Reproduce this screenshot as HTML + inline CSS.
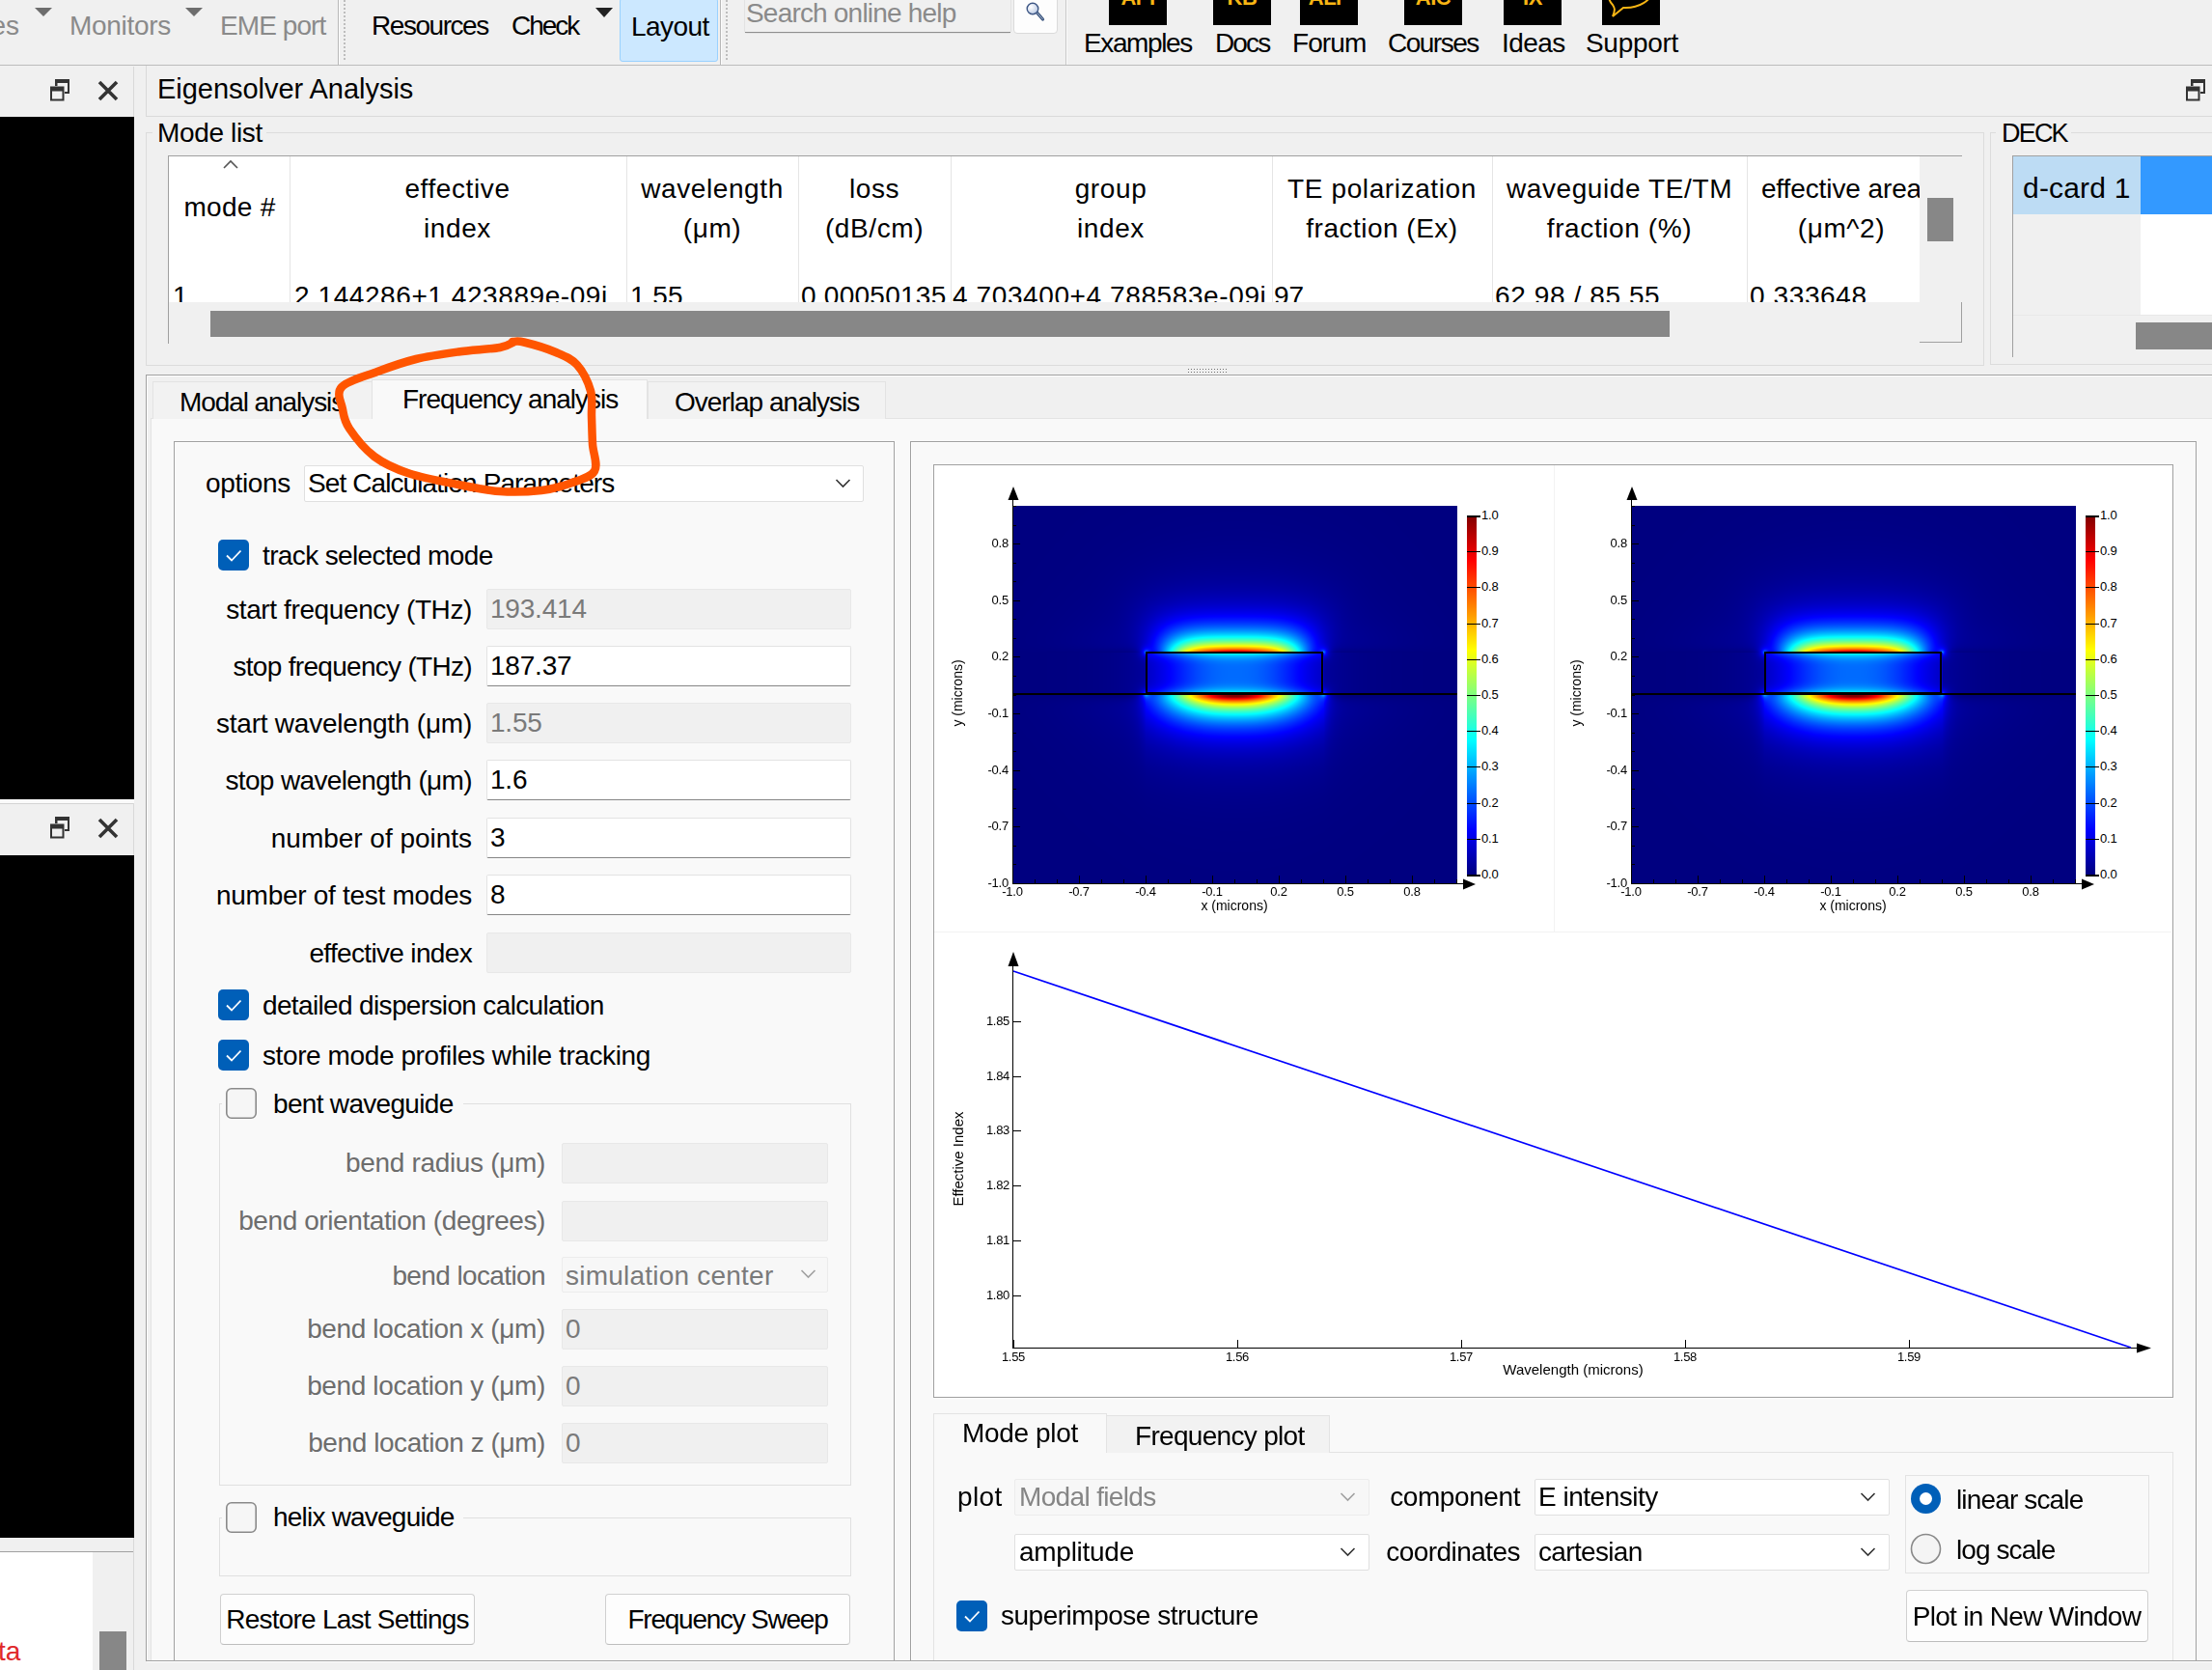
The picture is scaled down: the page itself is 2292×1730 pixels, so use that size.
<!DOCTYPE html>
<html><head><meta charset="utf-8"><style>html,body{margin:0;padding:0;width:2292px;height:1730px;overflow:hidden;background:#f0f0f0;}
body{position:relative;font-family:"Liberation Sans",sans-serif;}
.a{position:absolute;}
.t{position:absolute;white-space:pre;font-family:"Liberation Sans",sans-serif;}
</style></head>
<body>
<div class="a" style="left:0px;top:67px;width:2292px;height:1px;background:#bcbcbc;"></div>
<div class="t" style="top:13px;font-size:28px;line-height:28px;color:#8a8a8a;right:2272px;text-align:right;">es</div>
<svg class="a" style="left:36px;top:8px" width="19" height="10"><path d="M0 0 H18 L9 9 Z" fill="#6d6d6d"/></svg>
<div class="t" style="top:13px;font-size:28px;line-height:28px;color:#8a8a8a;left:72px;letter-spacing:-0.305px;">Monitors</div>
<svg class="a" style="left:192px;top:8px" width="19" height="10"><path d="M0 0 H18 L9 9 Z" fill="#6d6d6d"/></svg>
<div class="t" style="top:13px;font-size:28px;line-height:28px;color:#8a8a8a;left:228px;letter-spacing:-0.923px;">EME port</div>
<div class="a" style="left:350px;top:0px;width:1px;height:67px;background:#b8b8b8;"></div>
<div class="a" style="left:351px;top:0px;width:1px;height:67px;background:#fbfbfb;"></div>
<div class="a" style="left:356px;top:0;width:0;height:62px;border-left:2px dotted #bdbdbd"></div>
<div class="t" style="top:13px;font-size:28px;line-height:28px;color:#000;left:385px;letter-spacing:-1.450px;">Resources</div>
<div class="t" style="top:13px;font-size:28px;line-height:28px;color:#000;left:530px;letter-spacing:-2.034px;">Check</div>
<svg class="a" style="left:617px;top:8px" width="19" height="11"><path d="M0 0 H18 L9 10 Z" fill="#222"/></svg>
<div class="a" style="left:642px;top:-2px;width:102px;height:66px;background:#cce8ff;box-sizing:border-box;border:1px solid #99d1ff;border-radius:3px;"></div>
<div class="t" style="top:14px;font-size:28px;line-height:28px;color:#000;left:654px;letter-spacing:-0.568px;">Layout</div>
<div class="a" style="left:746px;top:0px;width:1px;height:67px;background:#b8b8b8;"></div>
<div class="a" style="left:747px;top:0px;width:1px;height:67px;background:#fbfbfb;"></div>
<div class="a" style="left:752px;top:0;width:0;height:62px;border-left:2px dotted #bdbdbd"></div>
<div class="a" style="left:771px;top:-4px;width:277px;height:39px;background:#f0f0f0;box-sizing:border-box;border:1px solid #e2e2e2;border-radius:3px;"></div>
<div class="a" style="left:772px;top:33px;width:275px;height:1px;background:#8f8f8f;"></div>
<div class="t" style="top:0px;font-size:28px;line-height:28px;color:#8a8a8a;left:773px;letter-spacing:-0.807px;">Search online help</div>
<div class="a" style="left:1050px;top:-6px;width:46px;height:41px;background:#fdfdfd;box-sizing:border-box;border:1px solid #dadada;border-radius:4px;"></div>
<svg class="a" style="left:1060px;top:1px" width="26" height="26"><defs><radialGradient id="lg" cx="0.35" cy="0.35" r="0.7"><stop offset="0" stop-color="#ffffff"/><stop offset="1" stop-color="#b9c9e4"/></radialGradient></defs><path d="M14 11.5 L20.5 19" stroke="#35507a" stroke-width="3.2" stroke-linecap="round"/><path d="M14 11.5 L20.5 19" stroke="#aab8d0" stroke-width="1" stroke-linecap="round"/><circle cx="10" cy="8" r="5.8" fill="url(#lg)" stroke="#3d5684" stroke-width="1.4"/></svg>
<div class="a" style="left:1104px;top:0px;width:1px;height:67px;background:#c8c8c8;"></div>
<div class="a" style="left:1105px;top:0px;width:1px;height:67px;background:#fbfbfb;"></div>
<div class="a" style="left:1149px;top:-30px;width:60px;height:56px;background:#000;"></div>
<div class="t" style="left:1149px;width:60px;text-align:center;top:-13px;font-size:22px;line-height:22px;font-weight:bold;color:#f7b514;letter-spacing:-0.5px">API</div>
<div class="a" style="left:1257px;top:-30px;width:60px;height:56px;background:#000;"></div>
<div class="t" style="left:1257px;width:60px;text-align:center;top:-13px;font-size:22px;line-height:22px;font-weight:bold;color:#f7b514;letter-spacing:-0.5px">KB</div>
<div class="a" style="left:1347px;top:-30px;width:60px;height:56px;background:#000;"></div>
<div class="t" style="left:1347px;width:60px;text-align:center;top:-13px;font-size:22px;line-height:22px;font-weight:bold;color:#f7b514;letter-spacing:-0.5px">ALP</div>
<div class="a" style="left:1455px;top:-30px;width:60px;height:56px;background:#000;"></div>
<div class="t" style="left:1455px;width:60px;text-align:center;top:-13px;font-size:22px;line-height:22px;font-weight:bold;color:#f7b514;letter-spacing:-0.5px">AIC</div>
<div class="a" style="left:1558px;top:-30px;width:60px;height:56px;background:#000;"></div>
<div class="t" style="left:1558px;width:60px;text-align:center;top:-13px;font-size:22px;line-height:22px;font-weight:bold;color:#f7b514;letter-spacing:-0.5px">IX</div>
<div class="a" style="left:1660px;top:-30px;width:60px;height:56px;background:#000;"></div>
<svg class="a" style="left:1660px;top:-30px" width="60" height="56"><path d="M8 18 C8 6 50 6 52 20 C52 30 38 39 22 38 L11 47 C14 40 13 38 11 35 C6 30 6 24 8 18 Z" fill="none" stroke="#f7b514" stroke-width="2"/></svg>
<div class="t" style="top:31px;font-size:28px;line-height:28px;color:#000;left:1123px;letter-spacing:-1.385px;">Examples</div>
<div class="t" style="top:31px;font-size:28px;line-height:28px;color:#000;left:1259px;letter-spacing:-1.852px;">Docs</div>
<div class="t" style="top:31px;font-size:28px;line-height:28px;color:#000;left:1339px;letter-spacing:-0.917px;">Forum</div>
<div class="t" style="top:31px;font-size:28px;line-height:28px;color:#000;left:1438px;letter-spacing:-1.504px;">Courses</div>
<div class="t" style="top:31px;font-size:28px;line-height:28px;color:#000;left:1556px;letter-spacing:-0.565px;">Ideas</div>
<div class="t" style="top:31px;font-size:28px;line-height:28px;color:#000;left:1643px;letter-spacing:-0.306px;">Support</div>
<div class="a" style="left:138px;top:69px;width:1px;height:1661px;background:#d9d9d9;"></div>
<svg class="a" style="left:51px;top:82px" width="23" height="24"><rect x="6" y="0" width="15" height="15" fill="#333"/><rect x="8.5" y="4" width="10.5" height="9" fill="#f0f0f0"/><rect x="0.5" y="7" width="15.5" height="16" fill="#f0f0f0"/><rect x="1" y="7.5" width="14.5" height="15" fill="#333"/><rect x="3" y="12.5" width="10.5" height="8" fill="#f0f0f0"/></svg>
<svg class="a" style="left:101px;top:83px" width="22" height="22"><path d="M2 2 L20 20 M20 2 L2 20" stroke="#333" stroke-width="3.6"/></svg>
<div class="a" style="left:0px;top:121px;width:139px;height:707px;background:#000;"></div>
<div class="a" style="left:0px;top:828px;width:139px;height:4px;background:#fafafa;"></div>
<div class="a" style="left:0px;top:832px;width:138px;height:1px;background:#d4d4d4;"></div>
<svg class="a" style="left:51px;top:846px" width="23" height="24"><rect x="6" y="0" width="15" height="15" fill="#333"/><rect x="8.5" y="4" width="10.5" height="9" fill="#f0f0f0"/><rect x="0.5" y="7" width="15.5" height="16" fill="#f0f0f0"/><rect x="1" y="7.5" width="14.5" height="15" fill="#333"/><rect x="3" y="12.5" width="10.5" height="8" fill="#f0f0f0"/></svg>
<svg class="a" style="left:101px;top:847px" width="22" height="22"><path d="M2 2 L20 20 M20 2 L2 20" stroke="#333" stroke-width="3.6"/></svg>
<div class="a" style="left:0px;top:886px;width:139px;height:707px;background:#000;"></div>
<div class="a" style="left:0px;top:1607px;width:138px;height:1px;background:#a0a0a0;"></div>
<div class="a" style="left:0px;top:1608px;width:96px;height:122px;background:#fff;"></div>
<div class="a" style="left:96px;top:1608px;width:42px;height:122px;background:#f0f0f0;"></div>
<div class="a" style="left:103px;top:1690px;width:28px;height:40px;background:#878787;"></div>
<div class="t" style="top:1697px;font-size:28px;line-height:28px;color:#e0282a;left:-2px;">ta</div>
<div class="a" style="left:151px;top:68px;width:1px;height:53px;background:#dadada;"></div>
<div class="a" style="left:151px;top:120px;width:2141px;height:1px;background:#dadada;"></div>
<div class="t" style="top:78px;font-size:29px;line-height:29px;color:#000;left:163px;letter-spacing:-0.035px;">Eigensolver Analysis</div>
<svg class="a" style="left:2264px;top:82px" width="23" height="24"><rect x="6" y="0" width="15" height="15" fill="#333"/><rect x="8.5" y="4" width="10.5" height="9" fill="#f0f0f0"/><rect x="0.5" y="7" width="15.5" height="16" fill="#f0f0f0"/><rect x="1" y="7.5" width="14.5" height="15" fill="#333"/><rect x="3" y="12.5" width="10.5" height="8" fill="#f0f0f0"/></svg>
<div class="a" style="left:151px;top:137px;width:1905px;height:242px;box-sizing:border-box;border:1px solid #dcdcdc;"></div>
<div class="a" style="left:158px;top:125px;width:118px;height:25px;background:#f0f0f0;"></div>
<div class="t" style="top:124px;font-size:28px;line-height:28px;color:#000;left:163px;letter-spacing:-0.351px;">Mode list</div>
<div class="a" style="left:175px;top:162px;width:1814px;height:151px;background:#fff;"></div>
<div class="a" style="left:174px;top:161px;width:1859px;height:1px;background:#a0a0a0;"></div>
<div class="a" style="left:174px;top:161px;width:1px;height:195px;background:#a0a0a0;"></div>
<div class="a" style="left:300px;top:162px;width:1px;height:151px;background:#e5e5e5;"></div>
<div class="a" style="left:649px;top:162px;width:1px;height:151px;background:#e5e5e5;"></div>
<div class="a" style="left:827px;top:162px;width:1px;height:151px;background:#e5e5e5;"></div>
<div class="a" style="left:985px;top:162px;width:1px;height:151px;background:#e5e5e5;"></div>
<div class="a" style="left:1318px;top:162px;width:1px;height:151px;background:#e5e5e5;"></div>
<div class="a" style="left:1546px;top:162px;width:1px;height:151px;background:#e5e5e5;"></div>
<div class="a" style="left:1810px;top:162px;width:1px;height:151px;background:#e5e5e5;"></div>
<svg class="a" style="left:231px;top:165px" width="16" height="10"><path d="M1 9 L8 2 L15 9" fill="none" stroke="#555" stroke-width="1.6"/></svg>
<div class="t" style="top:201px;font-size:28px;line-height:28px;color:#000;left:-362px;width:1200px;text-align:center;letter-spacing:0.3px;">mode #</div>
<div class="a" style="left:175px;top:162px;width:1814px;height:110px;overflow:hidden">
<div class="t" style="top:20px;font-size:28px;line-height:28px;color:#000;left:-301px;width:1200px;text-align:center;letter-spacing:0.600px;">effective</div>
<div class="t" style="top:61px;font-size:28px;line-height:28px;color:#000;left:-301px;width:1200px;text-align:center;letter-spacing:0.600px;">index</div>
<div class="t" style="top:20px;font-size:28px;line-height:28px;color:#000;left:-37px;width:1200px;text-align:center;letter-spacing:0.600px;">wavelength</div>
<div class="t" style="top:61px;font-size:28px;line-height:28px;color:#000;left:-37px;width:1200px;text-align:center;letter-spacing:0.600px;">(μm)</div>
<div class="t" style="top:20px;font-size:28px;line-height:28px;color:#000;left:131px;width:1200px;text-align:center;letter-spacing:0.600px;">loss</div>
<div class="t" style="top:61px;font-size:28px;line-height:28px;color:#000;left:131px;width:1200px;text-align:center;letter-spacing:0.600px;">(dB/cm)</div>
<div class="t" style="top:20px;font-size:28px;line-height:28px;color:#000;left:376px;width:1200px;text-align:center;letter-spacing:0.600px;">group</div>
<div class="t" style="top:61px;font-size:28px;line-height:28px;color:#000;left:376px;width:1200px;text-align:center;letter-spacing:0.600px;">index</div>
<div class="t" style="top:20px;font-size:28px;line-height:28px;color:#000;left:657px;width:1200px;text-align:center;letter-spacing:0.600px;">TE polarization</div>
<div class="t" style="top:61px;font-size:28px;line-height:28px;color:#000;left:657px;width:1200px;text-align:center;letter-spacing:0.492px;">fraction (Ex)</div>
<div class="t" style="top:20px;font-size:28px;line-height:28px;color:#000;left:903px;width:1200px;text-align:center;letter-spacing:0.600px;">waveguide TE/TM</div>
<div class="t" style="top:61px;font-size:28px;line-height:28px;color:#000;left:903px;width:1200px;text-align:center;letter-spacing:0.600px;">fraction (%)</div>
<div class="t" style="top:20px;font-size:28px;line-height:28px;color:#000;left:1133px;width:1200px;text-align:center;letter-spacing:-0.1px;">effective area</div>
<div class="t" style="top:61px;font-size:28px;line-height:28px;color:#000;left:1133px;width:1200px;text-align:center;letter-spacing:0.600px;">(μm^2)</div>
</div>
<div class="a" style="left:175px;top:263px;width:1814px;height:50px;overflow:hidden">
<div class="t" style="top:30px;font-size:28px;line-height:28px;color:#000;left:4px;letter-spacing:0px;">1</div>
<div class="t" style="top:30px;font-size:28px;line-height:28px;color:#000;left:130px;letter-spacing:0.574px;">2.144286+1.423889e-09i</div>
<div class="t" style="top:30px;font-size:28px;line-height:28px;color:#000;left:478px;letter-spacing:0px;">1.55</div>
<div class="t" style="top:30px;font-size:28px;line-height:28px;color:#000;left:655px;letter-spacing:0.256px;">0.00050135</div>
<div class="t" style="top:30px;font-size:28px;line-height:28px;color:#000;left:812px;letter-spacing:0.600px;">4.703400+4.788583e-09i</div>
<div class="t" style="top:30px;font-size:28px;line-height:28px;color:#000;left:1145px;letter-spacing:0px;">97</div>
<div class="t" style="top:30px;font-size:28px;line-height:28px;color:#000;left:1374px;letter-spacing:0.600px;">62.98 / 85.55</div>
<div class="t" style="top:30px;font-size:28px;line-height:28px;color:#000;left:1638px;letter-spacing:0.600px;">0.333648</div>
</div>
<div class="a" style="left:218px;top:322px;width:1512px;height:27px;background:#878787;"></div>
<div class="a" style="left:1989px;top:162px;width:44px;height:151px;background:#f0f0f0;"></div>
<div class="a" style="left:1997px;top:205px;width:27px;height:45px;background:#878787;"></div>
<div class="a" style="left:1989px;top:354px;width:44px;height:1px;background:#a0a0a0;"></div>
<div class="a" style="left:2032px;top:313px;width:1px;height:42px;background:#a0a0a0;"></div>
<div class="a" style="left:2062px;top:137px;width:238px;height:241px;box-sizing:border-box;border:1px solid #dcdcdc;"></div>
<div class="a" style="left:2068px;top:125px;width:78px;height:25px;background:#f0f0f0;"></div>
<div class="t" style="top:125px;font-size:27px;line-height:27px;color:#000;left:2074px;letter-spacing:-1.8px;">DECK</div>
<div class="a" style="left:2085px;top:161px;width:207px;height:1px;background:#a0a0a0;"></div>
<div class="a" style="left:2085px;top:161px;width:1px;height:209px;background:#a0a0a0;"></div>
<div class="a" style="left:2086px;top:162px;width:132px;height:60px;background:#bddcf4;"></div>
<div class="a" style="left:2218px;top:162px;width:74px;height:60px;background:#3399ff;"></div>
<div class="a" style="left:2218px;top:222px;width:74px;height:104px;background:#fff;"></div>
<div class="a" style="left:2086px;top:326px;width:206px;height:1px;background:#e8e8e8;"></div>
<div class="a" style="left:2213px;top:334px;width:79px;height:28px;background:#878787;"></div>
<div class="t" style="top:180px;font-size:30px;line-height:30px;color:#000;left:2096px;letter-spacing:0.191px;">d-card 1</div>
<svg class="a" style="left:1231px;top:382px" width="42" height="5"><g fill="#707070"><rect x="0" y="0" width="1" height="1"/><rect x="0" y="3" width="1" height="1"/><rect x="3" y="0" width="1" height="1"/><rect x="3" y="3" width="1" height="1"/><rect x="6" y="0" width="1" height="1"/><rect x="6" y="3" width="1" height="1"/><rect x="9" y="0" width="1" height="1"/><rect x="9" y="3" width="1" height="1"/><rect x="12" y="0" width="1" height="1"/><rect x="12" y="3" width="1" height="1"/><rect x="15" y="0" width="1" height="1"/><rect x="15" y="3" width="1" height="1"/><rect x="18" y="0" width="1" height="1"/><rect x="18" y="3" width="1" height="1"/><rect x="21" y="0" width="1" height="1"/><rect x="21" y="3" width="1" height="1"/><rect x="24" y="0" width="1" height="1"/><rect x="24" y="3" width="1" height="1"/><rect x="27" y="0" width="1" height="1"/><rect x="27" y="3" width="1" height="1"/><rect x="30" y="0" width="1" height="1"/><rect x="30" y="3" width="1" height="1"/><rect x="33" y="0" width="1" height="1"/><rect x="33" y="3" width="1" height="1"/><rect x="36" y="0" width="1" height="1"/><rect x="36" y="3" width="1" height="1"/><rect x="39" y="0" width="1" height="1"/><rect x="39" y="3" width="1" height="1"/></g></svg>
<div class="a" style="left:151px;top:388px;width:2141px;height:1px;background:#a0a0a0;"></div>
<div class="a" style="left:152px;top:389px;width:2140px;height:1px;background:#ffffff;"></div>
<div class="a" style="left:156px;top:433px;width:2136px;height:1287px;background:#f9f9f9;"></div>
<div class="a" style="left:156px;top:433px;width:2136px;height:1px;background:#e3e3e3;"></div>
<div class="a" style="left:156px;top:433px;width:1px;height:1287px;background:#e3e3e3;"></div>
<div class="a" style="left:151px;top:388px;width:1px;height:1333px;background:#a0a0a0;"></div>
<div class="a" style="left:152px;top:389px;width:1px;height:1331px;background:#fff;"></div>
<div class="a" style="left:158px;top:395px;width:228px;height:39px;background:#f2f2f2;box-sizing:border-box;border:1px solid #e3e3e3;border-bottom:none;"></div>
<div class="a" style="left:671px;top:395px;width:247px;height:39px;background:#f2f2f2;box-sizing:border-box;border:1px solid #e3e3e3;border-bottom:none;"></div>
<div class="a" style="left:385px;top:393px;width:286px;height:41px;background:#f9f9f9;box-sizing:border-box;border:1px solid #e3e3e3;border-bottom:none;"></div>
<div class="t" style="top:403px;font-size:28px;line-height:28px;color:#000;left:186px;letter-spacing:-1.074px;">Modal analysis</div>
<div class="t" style="top:400px;font-size:28px;line-height:28px;color:#000;left:417px;letter-spacing:-1.000px;">Frequency analysis</div>
<div class="t" style="top:403px;font-size:28px;line-height:28px;color:#000;left:699px;letter-spacing:-0.983px;">Overlap analysis</div>
<div class="a" style="left:180px;top:457px;width:747px;height:1264px;box-sizing:border-box;border:1px solid #a0a0a0;box-shadow:inset 1px 1px 0 #fff, 1px 1px 0 #fff;"></div>
<div class="t" style="top:487px;font-size:28px;line-height:28px;color:#000;left:213px;letter-spacing:-0.343px;">options</div>
<div class="a" style="left:315px;top:482px;width:580px;height:38px;background:#fff;box-sizing:border-box;border:1px solid #e0e0e0;border-radius:2px;"></div>
<svg class="a" style="left:865px;top:495px" width="18" height="12"><path d="M1.5 2 L8.5 9 L15.5 2" fill="none" stroke="#333" stroke-width="1.6"/></svg>
<div class="t" style="top:487px;font-size:28px;line-height:28px;color:#000;left:319px;letter-spacing:-0.904px;">Set Calculation Parameters</div>
<svg class="a" style="left:226px;top:559px" width="32" height="32"><rect x="0" y="0" width="32" height="32" rx="5" fill="#005fb8"/><path d="M9 16.5 L14 21.5 L23.5 11.5" fill="none" stroke="#fff" stroke-width="1.8"/></svg>
<div class="t" style="top:562px;font-size:28px;line-height:28px;color:#000;left:272px;letter-spacing:-0.630px;">track selected mode</div>
<div class="a" style="left:504px;top:610px;width:378px;height:42px;background:#f0f0f0;box-sizing:border-box;border:1px solid #e8e8e8;border-radius:2px;"></div>
<div class="t" style="top:617px;font-size:28px;line-height:28px;color:#7a7a7a;left:508px;letter-spacing:-0.2px;">193.414</div>
<div class="t" style="top:618px;font-size:28px;line-height:28px;color:#000;right:1803px;text-align:right;letter-spacing:-0.386px;">start frequency (THz)</div>
<div class="a" style="left:504px;top:669px;width:378px;height:42px;background:#fff;box-sizing:border-box;border:1px solid #e3e3e3;border-bottom:1px solid #868686;border-radius:2px;"></div>
<div class="t" style="top:676px;font-size:28px;line-height:28px;color:#000;left:508px;letter-spacing:-0.2px;">187.37</div>
<div class="t" style="top:677px;font-size:28px;line-height:28px;color:#000;right:1803px;text-align:right;letter-spacing:-0.694px;">stop frequency (THz)</div>
<div class="a" style="left:504px;top:728px;width:378px;height:42px;background:#f0f0f0;box-sizing:border-box;border:1px solid #e8e8e8;border-radius:2px;"></div>
<div class="t" style="top:735px;font-size:28px;line-height:28px;color:#7a7a7a;left:508px;letter-spacing:-0.2px;">1.55</div>
<div class="t" style="top:736px;font-size:28px;line-height:28px;color:#000;right:1803px;text-align:right;letter-spacing:-0.227px;">start wavelength (μm)</div>
<div class="a" style="left:504px;top:787px;width:378px;height:42px;background:#fff;box-sizing:border-box;border:1px solid #e3e3e3;border-bottom:1px solid #868686;border-radius:2px;"></div>
<div class="t" style="top:794px;font-size:28px;line-height:28px;color:#000;left:508px;letter-spacing:-0.2px;">1.6</div>
<div class="t" style="top:795px;font-size:28px;line-height:28px;color:#000;right:1803px;text-align:right;letter-spacing:-0.632px;">stop wavelength (μm)</div>
<div class="a" style="left:504px;top:847px;width:378px;height:42px;background:#fff;box-sizing:border-box;border:1px solid #e3e3e3;border-bottom:1px solid #868686;border-radius:2px;"></div>
<div class="t" style="top:854px;font-size:28px;line-height:28px;color:#000;left:508px;letter-spacing:-0.2px;">3</div>
<div class="t" style="top:855px;font-size:28px;line-height:28px;color:#000;right:1803px;text-align:right;letter-spacing:-0.023px;">number of points</div>
<div class="a" style="left:504px;top:906px;width:378px;height:42px;background:#fff;box-sizing:border-box;border:1px solid #e3e3e3;border-bottom:1px solid #868686;border-radius:2px;"></div>
<div class="t" style="top:913px;font-size:28px;line-height:28px;color:#000;left:508px;letter-spacing:-0.2px;">8</div>
<div class="t" style="top:914px;font-size:28px;line-height:28px;color:#000;right:1803px;text-align:right;letter-spacing:-0.293px;">number of test modes</div>
<div class="a" style="left:504px;top:966px;width:378px;height:42px;background:#f0f0f0;box-sizing:border-box;border:1px solid #e8e8e8;border-radius:2px;"></div>
<div class="t" style="top:974px;font-size:28px;line-height:28px;color:#000;right:1803px;text-align:right;letter-spacing:-0.661px;">effective index</div>
<svg class="a" style="left:226px;top:1025px" width="32" height="32"><rect x="0" y="0" width="32" height="32" rx="5" fill="#005fb8"/><path d="M9 16.5 L14 21.5 L23.5 11.5" fill="none" stroke="#fff" stroke-width="1.8"/></svg>
<div class="t" style="top:1028px;font-size:28px;line-height:28px;color:#000;left:272px;letter-spacing:-0.645px;">detailed dispersion calculation</div>
<svg class="a" style="left:226px;top:1077px" width="32" height="32"><rect x="0" y="0" width="32" height="32" rx="5" fill="#005fb8"/><path d="M9 16.5 L14 21.5 L23.5 11.5" fill="none" stroke="#fff" stroke-width="1.8"/></svg>
<div class="t" style="top:1080px;font-size:28px;line-height:28px;color:#000;left:272px;letter-spacing:-0.402px;">store mode profiles while tracking</div>
<div class="a" style="left:227px;top:1143px;width:655px;height:396px;box-sizing:border-box;border:1px solid #e0e0e0;"></div>
<div class="a" style="left:230px;top:1120px;width:250px;height:45px;background:#f9f9f9;"></div>
<svg class="a" style="left:234px;top:1127px" width="32" height="32"><rect x="0.8" y="0.8" width="30.4" height="30.4" rx="5" fill="#f6f6f6" stroke="#8a8a8a" stroke-width="1.6"/></svg>
<div class="t" style="top:1130px;font-size:28px;line-height:28px;color:#000;left:283px;letter-spacing:-0.686px;">bent waveguide</div>
<div class="a" style="left:582px;top:1184px;width:276px;height:42px;background:#f0f0f0;box-sizing:border-box;border:1px solid #e8e8e8;border-radius:2px;"></div>
<div class="t" style="top:1191px;font-size:28px;line-height:28px;color:#6d6d6d;right:1727px;text-align:right;letter-spacing:-0.332px;">bend radius (μm)</div>
<div class="a" style="left:582px;top:1244px;width:276px;height:42px;background:#f0f0f0;box-sizing:border-box;border:1px solid #e8e8e8;border-radius:2px;"></div>
<div class="t" style="top:1251px;font-size:28px;line-height:28px;color:#6d6d6d;right:1727px;text-align:right;letter-spacing:-0.409px;">bend orientation (degrees)</div>
<div class="a" style="left:582px;top:1302px;width:276px;height:37px;background:#f7f7f7;box-sizing:border-box;border:1px solid #ececec;border-radius:2px;"></div>
<svg class="a" style="left:829px;top:1314px" width="18" height="12"><path d="M1.5 2 L8.5 9 L15.5 2" fill="none" stroke="#a0a0a0" stroke-width="1.6"/></svg>
<div class="t" style="top:1308px;font-size:28px;line-height:28px;color:#7a7a7a;left:586px;letter-spacing:0.224px;">simulation center</div>
<div class="t" style="top:1308px;font-size:28px;line-height:28px;color:#6d6d6d;right:1727px;text-align:right;letter-spacing:-0.612px;">bend location</div>
<div class="a" style="left:582px;top:1356px;width:276px;height:42px;background:#f0f0f0;box-sizing:border-box;border:1px solid #e8e8e8;border-radius:2px;"></div>
<div class="t" style="top:1363px;font-size:28px;line-height:28px;color:#7a7a7a;left:586px;letter-spacing:-0.2px;">0</div>
<div class="t" style="top:1363px;font-size:28px;line-height:28px;color:#6d6d6d;right:1727px;text-align:right;letter-spacing:-0.369px;">bend location x (μm)</div>
<div class="a" style="left:582px;top:1415px;width:276px;height:42px;background:#f0f0f0;box-sizing:border-box;border:1px solid #e8e8e8;border-radius:2px;"></div>
<div class="t" style="top:1422px;font-size:28px;line-height:28px;color:#7a7a7a;left:586px;letter-spacing:-0.2px;">0</div>
<div class="t" style="top:1422px;font-size:28px;line-height:28px;color:#6d6d6d;right:1727px;text-align:right;letter-spacing:-0.369px;">bend location y (μm)</div>
<div class="a" style="left:582px;top:1474px;width:276px;height:42px;background:#f0f0f0;box-sizing:border-box;border:1px solid #e8e8e8;border-radius:2px;"></div>
<div class="t" style="top:1481px;font-size:28px;line-height:28px;color:#7a7a7a;left:586px;letter-spacing:-0.2px;">0</div>
<div class="t" style="top:1481px;font-size:28px;line-height:28px;color:#6d6d6d;right:1727px;text-align:right;letter-spacing:-0.422px;">bend location z (μm)</div>
<div class="a" style="left:227px;top:1572px;width:655px;height:61px;box-sizing:border-box;border:1px solid #e0e0e0;"></div>
<div class="a" style="left:230px;top:1550px;width:250px;height:40px;background:#f9f9f9;"></div>
<svg class="a" style="left:234px;top:1556px" width="32" height="32"><rect x="0.8" y="0.8" width="30.4" height="30.4" rx="5" fill="#f6f6f6" stroke="#8a8a8a" stroke-width="1.6"/></svg>
<div class="t" style="top:1558px;font-size:28px;line-height:28px;color:#000;left:283px;letter-spacing:-0.786px;">helix waveguide</div>
<div class="a" style="left:228px;top:1651px;width:264px;height:53px;background:#fdfdfd;box-sizing:border-box;border:1px solid #d0d0d0;border-bottom:1px solid #bdbdbd;border-radius:4px;"></div>
<div class="t" style="top:1664px;font-size:28px;line-height:28px;color:#000;left:-240px;width:1200px;text-align:center;letter-spacing:-0.773px;">Restore Last Settings</div>
<div class="a" style="left:627px;top:1651px;width:254px;height:53px;background:#fdfdfd;box-sizing:border-box;border:1px solid #d0d0d0;border-bottom:1px solid #bdbdbd;border-radius:4px;"></div>
<div class="t" style="top:1664px;font-size:28px;line-height:28px;color:#000;left:154px;width:1200px;text-align:center;letter-spacing:-1.246px;">Frequency Sweep</div>
<div class="a" style="left:943px;top:457px;width:1333px;height:1264px;box-sizing:border-box;border:1px solid #a0a0a0;box-shadow:inset 1px 1px 0 #fff, 1px 1px 0 #fff;"></div>
<div class="a" style="left:967px;top:481px;width:1285px;height:967px;background:#fff;box-sizing:border-box;border:1px solid #a0a0a0;"></div>
<div class="a" style="left:1610px;top:482px;width:1px;height:483px;background:#f2f2f2;"></div>
<div class="a" style="left:968px;top:965px;width:1282px;height:1px;background:#f2f2f2;"></div>
<canvas id="hm1" class="a" width="461" height="391" style="left:1049px;top:524px;width:461px;height:391px;background:radial-gradient(ellipse 100px 40px at 230px 152px,#b00000 0%,#ff4000 10%,#ffff00 25%,#00ffff 42%,#0060ff 60%,#0000c0 80%,rgba(0,0,128,0) 100%),radial-gradient(ellipse 100px 44px at 230px 197px,#b00000 0%,#ff4000 10%,#ffff00 25%,#00ffff 42%,#0060ff 60%,#0000c0 80%,rgba(0,0,128,0) 100%),#000080"></canvas>
<div class="a" style="left:1520px;top:534px;width:10px;height:372px;background:linear-gradient(to top,#000080 0%,#0000ff 12.5%,#00ffff 37.5%,#ffff00 62.5%,#ff0000 87.5%,#800000 100%)"></div>
<div class="a" style="left:1520px;top:906px;width:14px;height:2px;background:#000;"></div>
<div class="t" style="left:1535px;top:899px;font-size:13px;line-height:13px;letter-spacing:-0.2px">0.0</div>
<div class="a" style="left:1520px;top:869px;width:14px;height:1px;background:#000;"></div>
<div class="t" style="left:1535px;top:862px;font-size:13px;line-height:13px;letter-spacing:-0.2px">0.1</div>
<div class="a" style="left:1520px;top:832px;width:14px;height:1px;background:#000;"></div>
<div class="t" style="left:1535px;top:825px;font-size:13px;line-height:13px;letter-spacing:-0.2px">0.2</div>
<div class="a" style="left:1520px;top:794px;width:14px;height:1px;background:#000;"></div>
<div class="t" style="left:1535px;top:787px;font-size:13px;line-height:13px;letter-spacing:-0.2px">0.3</div>
<div class="a" style="left:1520px;top:757px;width:14px;height:1px;background:#000;"></div>
<div class="t" style="left:1535px;top:750px;font-size:13px;line-height:13px;letter-spacing:-0.2px">0.4</div>
<div class="a" style="left:1520px;top:720px;width:14px;height:1px;background:#000;"></div>
<div class="t" style="left:1535px;top:713px;font-size:13px;line-height:13px;letter-spacing:-0.2px">0.5</div>
<div class="a" style="left:1520px;top:683px;width:14px;height:1px;background:#000;"></div>
<div class="t" style="left:1535px;top:676px;font-size:13px;line-height:13px;letter-spacing:-0.2px">0.6</div>
<div class="a" style="left:1520px;top:646px;width:14px;height:1px;background:#000;"></div>
<div class="t" style="left:1535px;top:639px;font-size:13px;line-height:13px;letter-spacing:-0.2px">0.7</div>
<div class="a" style="left:1520px;top:608px;width:14px;height:1px;background:#000;"></div>
<div class="t" style="left:1535px;top:601px;font-size:13px;line-height:13px;letter-spacing:-0.2px">0.8</div>
<div class="a" style="left:1520px;top:571px;width:14px;height:1px;background:#000;"></div>
<div class="t" style="left:1535px;top:564px;font-size:13px;line-height:13px;letter-spacing:-0.2px">0.9</div>
<div class="a" style="left:1520px;top:534px;width:14px;height:2px;background:#000;"></div>
<div class="t" style="left:1535px;top:527px;font-size:13px;line-height:13px;letter-spacing:-0.2px">1.0</div>
<div class="a" style="left:1049px;top:512px;width:1px;height:404px;background:#000;"></div>
<div class="a" style="left:1049px;top:915px;width:471px;height:1px;background:#000;"></div>
<svg class="a" style="left:1043px;top:504px" width="14" height="15"><path d="M7 0 L12.5 14 H1.5 Z" fill="#000"/></svg>
<svg class="a" style="left:1516px;top:910px" width="14" height="12"><path d="M13 6 L0 0.5 V11.5 Z" fill="#000"/></svg>
<div class="a" style="left:1049px;top:915px;width:8px;height:1px;background:#000;"></div>
<div class="a" style="left:1049px;top:895px;width:4px;height:1px;background:#000;"></div>
<div class="a" style="left:1049px;top:876px;width:4px;height:1px;background:#000;"></div>
<div class="a" style="left:1049px;top:856px;width:8px;height:1px;background:#000;"></div>
<div class="a" style="left:1049px;top:837px;width:4px;height:1px;background:#000;"></div>
<div class="a" style="left:1049px;top:817px;width:4px;height:1px;background:#000;"></div>
<div class="a" style="left:1049px;top:798px;width:8px;height:1px;background:#000;"></div>
<div class="a" style="left:1049px;top:778px;width:4px;height:1px;background:#000;"></div>
<div class="a" style="left:1049px;top:759px;width:4px;height:1px;background:#000;"></div>
<div class="a" style="left:1049px;top:739px;width:8px;height:1px;background:#000;"></div>
<div class="a" style="left:1049px;top:720px;width:4px;height:1px;background:#000;"></div>
<div class="a" style="left:1049px;top:700px;width:4px;height:1px;background:#000;"></div>
<div class="a" style="left:1049px;top:680px;width:8px;height:1px;background:#000;"></div>
<div class="a" style="left:1049px;top:661px;width:4px;height:1px;background:#000;"></div>
<div class="a" style="left:1049px;top:641px;width:4px;height:1px;background:#000;"></div>
<div class="a" style="left:1049px;top:622px;width:8px;height:1px;background:#000;"></div>
<div class="a" style="left:1049px;top:602px;width:4px;height:1px;background:#000;"></div>
<div class="a" style="left:1049px;top:583px;width:4px;height:1px;background:#000;"></div>
<div class="a" style="left:1049px;top:563px;width:8px;height:1px;background:#000;"></div>
<div class="a" style="left:1049px;top:544px;width:4px;height:1px;background:#000;"></div>
<div class="a" style="left:1049px;top:524px;width:4px;height:1px;background:#000;"></div>
<div class="t" style="left:689px;width:356px;text-align:right;top:908px;font-size:13px;line-height:13px;letter-spacing:-0.2px">-1.0</div>
<div class="t" style="left:689px;width:356px;text-align:right;top:849px;font-size:13px;line-height:13px;letter-spacing:-0.2px">-0.7</div>
<div class="t" style="left:689px;width:356px;text-align:right;top:791px;font-size:13px;line-height:13px;letter-spacing:-0.2px">-0.4</div>
<div class="t" style="left:689px;width:356px;text-align:right;top:732px;font-size:13px;line-height:13px;letter-spacing:-0.2px">-0.1</div>
<div class="t" style="left:689px;width:356px;text-align:right;top:673px;font-size:13px;line-height:13px;letter-spacing:-0.2px">0.2</div>
<div class="t" style="left:689px;width:356px;text-align:right;top:615px;font-size:13px;line-height:13px;letter-spacing:-0.2px">0.5</div>
<div class="t" style="left:689px;width:356px;text-align:right;top:556px;font-size:13px;line-height:13px;letter-spacing:-0.2px">0.8</div>
<div class="a" style="left:1049px;top:907px;width:1px;height:8px;background:#000;"></div>
<div class="a" style="left:1072px;top:911px;width:1px;height:4px;background:#000;"></div>
<div class="a" style="left:1095px;top:911px;width:1px;height:4px;background:#000;"></div>
<div class="a" style="left:1118px;top:907px;width:1px;height:8px;background:#000;"></div>
<div class="a" style="left:1141px;top:911px;width:1px;height:4px;background:#000;"></div>
<div class="a" style="left:1164px;top:911px;width:1px;height:4px;background:#000;"></div>
<div class="a" style="left:1187px;top:907px;width:1px;height:8px;background:#000;"></div>
<div class="a" style="left:1210px;top:911px;width:1px;height:4px;background:#000;"></div>
<div class="a" style="left:1233px;top:911px;width:1px;height:4px;background:#000;"></div>
<div class="a" style="left:1256px;top:907px;width:1px;height:8px;background:#000;"></div>
<div class="a" style="left:1279px;top:911px;width:1px;height:4px;background:#000;"></div>
<div class="a" style="left:1302px;top:911px;width:1px;height:4px;background:#000;"></div>
<div class="a" style="left:1325px;top:907px;width:1px;height:8px;background:#000;"></div>
<div class="a" style="left:1348px;top:911px;width:1px;height:4px;background:#000;"></div>
<div class="a" style="left:1371px;top:911px;width:1px;height:4px;background:#000;"></div>
<div class="a" style="left:1394px;top:907px;width:1px;height:8px;background:#000;"></div>
<div class="a" style="left:1417px;top:911px;width:1px;height:4px;background:#000;"></div>
<div class="a" style="left:1440px;top:911px;width:1px;height:4px;background:#000;"></div>
<div class="a" style="left:1463px;top:907px;width:1px;height:8px;background:#000;"></div>
<div class="a" style="left:1486px;top:911px;width:1px;height:4px;background:#000;"></div>
<div class="a" style="left:1509px;top:911px;width:1px;height:4px;background:#000;"></div>
<div class="t" style="left:999px;width:100px;text-align:center;top:917px;font-size:13px;line-height:13px;letter-spacing:-0.2px">-1.0</div>
<div class="t" style="left:1068px;width:100px;text-align:center;top:917px;font-size:13px;line-height:13px;letter-spacing:-0.2px">-0.7</div>
<div class="t" style="left:1137px;width:100px;text-align:center;top:917px;font-size:13px;line-height:13px;letter-spacing:-0.2px">-0.4</div>
<div class="t" style="left:1206px;width:100px;text-align:center;top:917px;font-size:13px;line-height:13px;letter-spacing:-0.2px">-0.1</div>
<div class="t" style="left:1275px;width:100px;text-align:center;top:917px;font-size:13px;line-height:13px;letter-spacing:-0.2px">0.2</div>
<div class="t" style="left:1344px;width:100px;text-align:center;top:917px;font-size:13px;line-height:13px;letter-spacing:-0.2px">0.5</div>
<div class="t" style="left:1413px;width:100px;text-align:center;top:917px;font-size:13px;line-height:13px;letter-spacing:-0.2px">0.8</div>
<div class="t" style="left:1179px;width:200px;text-align:center;top:931px;font-size:14px;line-height:14px">x (microns)</div>
<div class="t" style="left:892px;width:200px;text-align:center;top:711px;font-size:14px;line-height:14px;transform:rotate(-90deg)">y (microns)</div>
<div class="a" style="left:1187px;top:675px;width:184px;height:44px;box-sizing:border-box;border:2px solid #000"></div>
<div class="a" style="left:1049px;top:718px;width:461px;height:2px;background:#000;"></div>
<canvas id="hm2" class="a" width="461" height="391" style="left:1690px;top:524px;width:461px;height:391px;background:radial-gradient(ellipse 100px 40px at 230px 152px,#b00000 0%,#ff4000 10%,#ffff00 25%,#00ffff 42%,#0060ff 60%,#0000c0 80%,rgba(0,0,128,0) 100%),radial-gradient(ellipse 100px 44px at 230px 197px,#b00000 0%,#ff4000 10%,#ffff00 25%,#00ffff 42%,#0060ff 60%,#0000c0 80%,rgba(0,0,128,0) 100%),#000080"></canvas>
<div class="a" style="left:2161px;top:534px;width:10px;height:372px;background:linear-gradient(to top,#000080 0%,#0000ff 12.5%,#00ffff 37.5%,#ffff00 62.5%,#ff0000 87.5%,#800000 100%)"></div>
<div class="a" style="left:2161px;top:906px;width:14px;height:2px;background:#000;"></div>
<div class="t" style="left:2176px;top:899px;font-size:13px;line-height:13px;letter-spacing:-0.2px">0.0</div>
<div class="a" style="left:2161px;top:869px;width:14px;height:1px;background:#000;"></div>
<div class="t" style="left:2176px;top:862px;font-size:13px;line-height:13px;letter-spacing:-0.2px">0.1</div>
<div class="a" style="left:2161px;top:832px;width:14px;height:1px;background:#000;"></div>
<div class="t" style="left:2176px;top:825px;font-size:13px;line-height:13px;letter-spacing:-0.2px">0.2</div>
<div class="a" style="left:2161px;top:794px;width:14px;height:1px;background:#000;"></div>
<div class="t" style="left:2176px;top:787px;font-size:13px;line-height:13px;letter-spacing:-0.2px">0.3</div>
<div class="a" style="left:2161px;top:757px;width:14px;height:1px;background:#000;"></div>
<div class="t" style="left:2176px;top:750px;font-size:13px;line-height:13px;letter-spacing:-0.2px">0.4</div>
<div class="a" style="left:2161px;top:720px;width:14px;height:1px;background:#000;"></div>
<div class="t" style="left:2176px;top:713px;font-size:13px;line-height:13px;letter-spacing:-0.2px">0.5</div>
<div class="a" style="left:2161px;top:683px;width:14px;height:1px;background:#000;"></div>
<div class="t" style="left:2176px;top:676px;font-size:13px;line-height:13px;letter-spacing:-0.2px">0.6</div>
<div class="a" style="left:2161px;top:646px;width:14px;height:1px;background:#000;"></div>
<div class="t" style="left:2176px;top:639px;font-size:13px;line-height:13px;letter-spacing:-0.2px">0.7</div>
<div class="a" style="left:2161px;top:608px;width:14px;height:1px;background:#000;"></div>
<div class="t" style="left:2176px;top:601px;font-size:13px;line-height:13px;letter-spacing:-0.2px">0.8</div>
<div class="a" style="left:2161px;top:571px;width:14px;height:1px;background:#000;"></div>
<div class="t" style="left:2176px;top:564px;font-size:13px;line-height:13px;letter-spacing:-0.2px">0.9</div>
<div class="a" style="left:2161px;top:534px;width:14px;height:2px;background:#000;"></div>
<div class="t" style="left:2176px;top:527px;font-size:13px;line-height:13px;letter-spacing:-0.2px">1.0</div>
<div class="a" style="left:1690px;top:512px;width:1px;height:404px;background:#000;"></div>
<div class="a" style="left:1690px;top:915px;width:471px;height:1px;background:#000;"></div>
<svg class="a" style="left:1684px;top:504px" width="14" height="15"><path d="M7 0 L12.5 14 H1.5 Z" fill="#000"/></svg>
<svg class="a" style="left:2157px;top:910px" width="14" height="12"><path d="M13 6 L0 0.5 V11.5 Z" fill="#000"/></svg>
<div class="a" style="left:1690px;top:915px;width:8px;height:1px;background:#000;"></div>
<div class="a" style="left:1690px;top:895px;width:4px;height:1px;background:#000;"></div>
<div class="a" style="left:1690px;top:876px;width:4px;height:1px;background:#000;"></div>
<div class="a" style="left:1690px;top:856px;width:8px;height:1px;background:#000;"></div>
<div class="a" style="left:1690px;top:837px;width:4px;height:1px;background:#000;"></div>
<div class="a" style="left:1690px;top:817px;width:4px;height:1px;background:#000;"></div>
<div class="a" style="left:1690px;top:798px;width:8px;height:1px;background:#000;"></div>
<div class="a" style="left:1690px;top:778px;width:4px;height:1px;background:#000;"></div>
<div class="a" style="left:1690px;top:759px;width:4px;height:1px;background:#000;"></div>
<div class="a" style="left:1690px;top:739px;width:8px;height:1px;background:#000;"></div>
<div class="a" style="left:1690px;top:720px;width:4px;height:1px;background:#000;"></div>
<div class="a" style="left:1690px;top:700px;width:4px;height:1px;background:#000;"></div>
<div class="a" style="left:1690px;top:680px;width:8px;height:1px;background:#000;"></div>
<div class="a" style="left:1690px;top:661px;width:4px;height:1px;background:#000;"></div>
<div class="a" style="left:1690px;top:641px;width:4px;height:1px;background:#000;"></div>
<div class="a" style="left:1690px;top:622px;width:8px;height:1px;background:#000;"></div>
<div class="a" style="left:1690px;top:602px;width:4px;height:1px;background:#000;"></div>
<div class="a" style="left:1690px;top:583px;width:4px;height:1px;background:#000;"></div>
<div class="a" style="left:1690px;top:563px;width:8px;height:1px;background:#000;"></div>
<div class="a" style="left:1690px;top:544px;width:4px;height:1px;background:#000;"></div>
<div class="a" style="left:1690px;top:524px;width:4px;height:1px;background:#000;"></div>
<div class="t" style="left:1330px;width:356px;text-align:right;top:908px;font-size:13px;line-height:13px;letter-spacing:-0.2px">-1.0</div>
<div class="t" style="left:1330px;width:356px;text-align:right;top:849px;font-size:13px;line-height:13px;letter-spacing:-0.2px">-0.7</div>
<div class="t" style="left:1330px;width:356px;text-align:right;top:791px;font-size:13px;line-height:13px;letter-spacing:-0.2px">-0.4</div>
<div class="t" style="left:1330px;width:356px;text-align:right;top:732px;font-size:13px;line-height:13px;letter-spacing:-0.2px">-0.1</div>
<div class="t" style="left:1330px;width:356px;text-align:right;top:673px;font-size:13px;line-height:13px;letter-spacing:-0.2px">0.2</div>
<div class="t" style="left:1330px;width:356px;text-align:right;top:615px;font-size:13px;line-height:13px;letter-spacing:-0.2px">0.5</div>
<div class="t" style="left:1330px;width:356px;text-align:right;top:556px;font-size:13px;line-height:13px;letter-spacing:-0.2px">0.8</div>
<div class="a" style="left:1690px;top:907px;width:1px;height:8px;background:#000;"></div>
<div class="a" style="left:1713px;top:911px;width:1px;height:4px;background:#000;"></div>
<div class="a" style="left:1736px;top:911px;width:1px;height:4px;background:#000;"></div>
<div class="a" style="left:1759px;top:907px;width:1px;height:8px;background:#000;"></div>
<div class="a" style="left:1782px;top:911px;width:1px;height:4px;background:#000;"></div>
<div class="a" style="left:1805px;top:911px;width:1px;height:4px;background:#000;"></div>
<div class="a" style="left:1828px;top:907px;width:1px;height:8px;background:#000;"></div>
<div class="a" style="left:1851px;top:911px;width:1px;height:4px;background:#000;"></div>
<div class="a" style="left:1874px;top:911px;width:1px;height:4px;background:#000;"></div>
<div class="a" style="left:1897px;top:907px;width:1px;height:8px;background:#000;"></div>
<div class="a" style="left:1920px;top:911px;width:1px;height:4px;background:#000;"></div>
<div class="a" style="left:1943px;top:911px;width:1px;height:4px;background:#000;"></div>
<div class="a" style="left:1966px;top:907px;width:1px;height:8px;background:#000;"></div>
<div class="a" style="left:1989px;top:911px;width:1px;height:4px;background:#000;"></div>
<div class="a" style="left:2012px;top:911px;width:1px;height:4px;background:#000;"></div>
<div class="a" style="left:2035px;top:907px;width:1px;height:8px;background:#000;"></div>
<div class="a" style="left:2058px;top:911px;width:1px;height:4px;background:#000;"></div>
<div class="a" style="left:2081px;top:911px;width:1px;height:4px;background:#000;"></div>
<div class="a" style="left:2104px;top:907px;width:1px;height:8px;background:#000;"></div>
<div class="a" style="left:2127px;top:911px;width:1px;height:4px;background:#000;"></div>
<div class="a" style="left:2150px;top:911px;width:1px;height:4px;background:#000;"></div>
<div class="t" style="left:1640px;width:100px;text-align:center;top:917px;font-size:13px;line-height:13px;letter-spacing:-0.2px">-1.0</div>
<div class="t" style="left:1709px;width:100px;text-align:center;top:917px;font-size:13px;line-height:13px;letter-spacing:-0.2px">-0.7</div>
<div class="t" style="left:1778px;width:100px;text-align:center;top:917px;font-size:13px;line-height:13px;letter-spacing:-0.2px">-0.4</div>
<div class="t" style="left:1847px;width:100px;text-align:center;top:917px;font-size:13px;line-height:13px;letter-spacing:-0.2px">-0.1</div>
<div class="t" style="left:1916px;width:100px;text-align:center;top:917px;font-size:13px;line-height:13px;letter-spacing:-0.2px">0.2</div>
<div class="t" style="left:1985px;width:100px;text-align:center;top:917px;font-size:13px;line-height:13px;letter-spacing:-0.2px">0.5</div>
<div class="t" style="left:2054px;width:100px;text-align:center;top:917px;font-size:13px;line-height:13px;letter-spacing:-0.2px">0.8</div>
<div class="t" style="left:1820px;width:200px;text-align:center;top:931px;font-size:14px;line-height:14px">x (microns)</div>
<div class="t" style="left:1533px;width:200px;text-align:center;top:711px;font-size:14px;line-height:14px;transform:rotate(-90deg)">y (microns)</div>
<div class="a" style="left:1828px;top:675px;width:184px;height:44px;box-sizing:border-box;border:2px solid #000"></div>
<div class="a" style="left:1690px;top:718px;width:461px;height:2px;background:#000;"></div>
<div class="a" style="left:1049px;top:999px;width:1px;height:398px;background:#000;"></div>
<div class="a" style="left:1049px;top:1396px;width:1167px;height:1px;background:#000;"></div>
<svg class="a" style="left:1043px;top:986px" width="14" height="16"><path d="M7 0 L12.5 15 H1.5 Z" fill="#000"/></svg>
<svg class="a" style="left:2214px;top:1391px" width="16" height="11"><path d="M15 5.5 L0 0.5 V10.5 Z" fill="#000"/></svg>
<div class="a" style="left:1049px;top:1342px;width:9px;height:1px;background:#000;"></div>
<div class="t" style="left:746px;width:300px;text-align:right;top:1335px;font-size:13px;line-height:13px;letter-spacing:-0.3px">1.80</div>
<div class="a" style="left:1049px;top:1285px;width:9px;height:1px;background:#000;"></div>
<div class="t" style="left:746px;width:300px;text-align:right;top:1278px;font-size:13px;line-height:13px;letter-spacing:-0.3px">1.81</div>
<div class="a" style="left:1049px;top:1228px;width:9px;height:1px;background:#000;"></div>
<div class="t" style="left:746px;width:300px;text-align:right;top:1221px;font-size:13px;line-height:13px;letter-spacing:-0.3px">1.82</div>
<div class="a" style="left:1049px;top:1171px;width:9px;height:1px;background:#000;"></div>
<div class="t" style="left:746px;width:300px;text-align:right;top:1164px;font-size:13px;line-height:13px;letter-spacing:-0.3px">1.83</div>
<div class="a" style="left:1049px;top:1115px;width:9px;height:1px;background:#000;"></div>
<div class="t" style="left:746px;width:300px;text-align:right;top:1108px;font-size:13px;line-height:13px;letter-spacing:-0.3px">1.84</div>
<div class="a" style="left:1049px;top:1058px;width:9px;height:1px;background:#000;"></div>
<div class="t" style="left:746px;width:300px;text-align:right;top:1051px;font-size:13px;line-height:13px;letter-spacing:-0.3px">1.85</div>
<div class="a" style="left:1050px;top:1388px;width:1px;height:8px;background:#000;"></div>
<div class="t" style="left:1000px;width:100px;text-align:center;top:1399px;font-size:13px;line-height:13px;letter-spacing:-0.3px">1.55</div>
<div class="a" style="left:1282px;top:1388px;width:1px;height:8px;background:#000;"></div>
<div class="t" style="left:1232px;width:100px;text-align:center;top:1399px;font-size:13px;line-height:13px;letter-spacing:-0.3px">1.56</div>
<div class="a" style="left:1514px;top:1388px;width:1px;height:8px;background:#000;"></div>
<div class="t" style="left:1464px;width:100px;text-align:center;top:1399px;font-size:13px;line-height:13px;letter-spacing:-0.3px">1.57</div>
<div class="a" style="left:1746px;top:1388px;width:1px;height:8px;background:#000;"></div>
<div class="t" style="left:1696px;width:100px;text-align:center;top:1399px;font-size:13px;line-height:13px;letter-spacing:-0.3px">1.58</div>
<div class="a" style="left:1978px;top:1388px;width:1px;height:8px;background:#000;"></div>
<div class="t" style="left:1928px;width:100px;text-align:center;top:1399px;font-size:13px;line-height:13px;letter-spacing:-0.3px">1.59</div>
<svg class="a" style="left:0;top:0" width="2292" height="1730"><path d="M1050 1006 L2208 1396" stroke="#0000ff" stroke-width="1.7" fill="none"/></svg>
<div class="t" style="left:1480px;width:300px;text-align:center;top:1411px;font-size:15px;line-height:15px">Wavelength (microns)</div>
<div class="t" style="left:842px;width:300px;text-align:center;top:1193px;font-size:15px;line-height:15px;transform:rotate(-90deg)">Effective Index</div>
<div class="a" style="left:967px;top:1504px;width:1285px;height:226px;background:#f9f9f9;box-sizing:border-box;border:1px solid #e3e3e3;"></div>
<div class="a" style="left:1146px;top:1466px;width:232px;height:39px;background:#f2f2f2;box-sizing:border-box;border:1px solid #e3e3e3;border-bottom:none;"></div>
<div class="a" style="left:967px;top:1464px;width:180px;height:41px;background:#f9f9f9;box-sizing:border-box;border:1px solid #e3e3e3;border-bottom:none;"></div>
<div class="t" style="top:1471px;font-size:28px;line-height:28px;color:#000;left:997px;letter-spacing:-0.341px;">Mode plot</div>
<div class="t" style="top:1474px;font-size:28px;line-height:28px;color:#000;left:1176px;letter-spacing:-0.691px;">Frequency plot</div>
<div class="a" style="left:151px;top:1721px;width:2141px;height:9px;background:#f0f0f0;"></div>
<div class="a" style="left:151px;top:1720px;width:2141px;height:1px;background:#a0a0a0;"></div>
<div class="a" style="left:152px;top:1721px;width:2140px;height:1px;background:#fff;"></div>
<div class="a" style="left:2251px;top:1504px;width:1px;height:216px;background:#e3e3e3;"></div>
<div class="a" style="left:2275px;top:457px;width:1px;height:1263px;background:#a0a0a0;"></div>
<div class="t" style="top:1537px;font-size:28px;line-height:28px;color:#000;left:992px;letter-spacing:0.361px;">plot</div>
<div class="a" style="left:1051px;top:1532px;width:368px;height:38px;background:#f7f7f7;box-sizing:border-box;border:1px solid #ececec;border-radius:2px;"></div>
<svg class="a" style="left:1388px;top:1545px" width="18" height="12"><path d="M1.5 2 L8.5 9 L15.5 2" fill="none" stroke="#a0a0a0" stroke-width="1.6"/></svg>
<div class="t" style="top:1537px;font-size:28px;line-height:28px;color:#858585;left:1056px;letter-spacing:-0.651px;">Modal fields</div>
<div class="a" style="left:1051px;top:1589px;width:368px;height:38px;background:#fff;box-sizing:border-box;border:1px solid #e0e0e0;border-radius:2px;"></div>
<svg class="a" style="left:1388px;top:1602px" width="18" height="12"><path d="M1.5 2 L8.5 9 L15.5 2" fill="none" stroke="#333" stroke-width="1.6"/></svg>
<div class="t" style="top:1594px;font-size:28px;line-height:28px;color:#000;left:1056px;letter-spacing:-0.271px;">amplitude</div>
<div class="t" style="top:1537px;font-size:28px;line-height:28px;color:#000;right:717px;text-align:right;letter-spacing:-0.413px;">component</div>
<div class="t" style="top:1594px;font-size:28px;line-height:28px;color:#000;right:717px;text-align:right;letter-spacing:-0.553px;">coordinates</div>
<div class="a" style="left:1590px;top:1532px;width:368px;height:38px;background:#fff;box-sizing:border-box;border:1px solid #e0e0e0;border-radius:2px;"></div>
<svg class="a" style="left:1927px;top:1545px" width="18" height="12"><path d="M1.5 2 L8.5 9 L15.5 2" fill="none" stroke="#333" stroke-width="1.6"/></svg>
<div class="t" style="top:1537px;font-size:28px;line-height:28px;color:#000;left:1594px;letter-spacing:-0.493px;">E intensity</div>
<div class="a" style="left:1590px;top:1589px;width:368px;height:38px;background:#fff;box-sizing:border-box;border:1px solid #e0e0e0;border-radius:2px;"></div>
<svg class="a" style="left:1927px;top:1602px" width="18" height="12"><path d="M1.5 2 L8.5 9 L15.5 2" fill="none" stroke="#333" stroke-width="1.6"/></svg>
<div class="t" style="top:1594px;font-size:28px;line-height:28px;color:#000;left:1594px;letter-spacing:-0.673px;">cartesian</div>
<div class="a" style="left:1974px;top:1528px;width:253px;height:102px;box-sizing:border-box;border:1px solid #e3e3e3;"></div>
<svg class="a" style="left:1979px;top:1536px" width="34" height="34"><circle cx="16.5" cy="16.5" r="15.5" fill="#005fb8"/><circle cx="16.5" cy="16.5" r="6.5" fill="#fff"/></svg>
<svg class="a" style="left:1979px;top:1588px" width="34" height="34"><circle cx="16.5" cy="16.5" r="15" fill="#f4f4f4" stroke="#8a8a8a" stroke-width="1.6"/></svg>
<div class="t" style="top:1540px;font-size:28px;line-height:28px;color:#000;left:2027px;letter-spacing:-0.855px;">linear scale</div>
<div class="t" style="top:1592px;font-size:28px;line-height:28px;color:#000;left:2027px;letter-spacing:-0.909px;">log scale</div>
<svg class="a" style="left:991px;top:1658px" width="32" height="32"><rect x="0" y="0" width="32" height="32" rx="5" fill="#005fb8"/><path d="M9 16.5 L14 21.5 L23.5 11.5" fill="none" stroke="#fff" stroke-width="1.8"/></svg>
<div class="t" style="top:1660px;font-size:28px;line-height:28px;color:#000;left:1037px;letter-spacing:-0.489px;">superimpose structure</div>
<div class="a" style="left:1975px;top:1647px;width:251px;height:54px;background:#fdfdfd;box-sizing:border-box;border:1px solid #d0d0d0;border-bottom:1px solid #bdbdbd;border-radius:4px;"></div>
<div class="t" style="top:1661px;font-size:28px;line-height:28px;color:#000;left:1500px;width:1200px;text-align:center;letter-spacing:-0.691px;">Plot in New Window</div>
<svg class="a" style="left:0;top:0" width="2292" height="1730"><path d="M533 354 C530.5 355.0 527.7 358.2 518 360 C508.3 361.8 489.5 362.5 475 364.5 C460.5 366.5 445.0 368.6 431 372 C417.0 375.4 403.8 380.2 391 385 C378.2 389.8 360.0 394.5 354 401 C348.0 407.5 353.7 416.8 355 424 C356.3 431.2 356.5 435.8 362 444 C367.5 452.2 377.7 465.2 388 473 C398.3 480.8 409.5 485.7 424 490.5 C438.5 495.3 459.3 498.9 475 502 C490.7 505.1 503.7 508.0 518 509 C532.3 510.0 549.0 509.3 561 508 C573.0 506.7 580.8 504.3 590 501 C599.2 497.7 612.0 494.8 616 488 C620.0 481.2 614.5 469.5 614 460 C613.5 450.5 613.3 440.2 613 431 C612.7 421.8 614.5 413.8 612 405 C609.5 396.2 604.0 384.7 598 378 C592.0 371.3 585.2 368.9 576 365 C566.8 361.1 550.5 356.3 543 354.5 C535.5 352.7 533.0 354.1 531 354" fill="none" stroke="#ff5500" stroke-width="8.5" stroke-linecap="round" stroke-linejoin="round"/></svg>
<script>(function(){
function jet(v){
  var r=Math.min(1,Math.max(0,1.5-Math.abs(4*v-3)));
  var g=Math.min(1,Math.max(0,1.5-Math.abs(4*v-2)));
  var b=Math.min(1,Math.max(0,1.5-Math.abs(4*v-1)));
  return [Math.round(r*255),Math.round(g*255),Math.round(b*255)];
}
function draw(id){
  var c=document.getElementById(id); if(!c||!c.getContext) return;
  var ctx=c.getContext('2d'); var W=461,H=391;
  var img=ctx.createImageData(W,H); var d=img.data;
  var cx=230.5, hw=92, yt=152, yb=195;
  for(var j=0;j<H;j++){
    for(var i=0;i<W;i++){
      var x=i+0.5-cx, ax=Math.abs(x), y=j+0.5, I, dy;
      if(y<yt){
        dy=yt-y;
        I = 0.85*Math.exp(-dy/17)*Math.exp(-Math.pow(ax/(70+0.5*dy),4)) + 0.15*Math.exp(-dy/3)*Math.exp(-Math.pow(ax/25,2));
        var r=Math.sqrt((ax-hw)*(ax-hw)+dy*dy); I += 0.25*Math.exp(-r/3) + 0.07*Math.exp(-Math.pow(ax/130,2))*(1-Math.exp(-dy/6))*Math.exp(-dy/50);
      } else if(y>yb){
        dy=Math.max(0,y-yb-3);
        I = 0.85*Math.exp(-dy/19)*Math.exp(-Math.pow(ax/(71+0.5*dy),2.5)) + 0.15*Math.exp(-dy/4)*Math.exp(-Math.pow(ax/30,2));
        if(ax>hw) I*=Math.exp(-(ax-hw)/10);
        var r=Math.sqrt((ax-hw)*(ax-hw)+(y-yb)*(y-yb)); I += 0.25*Math.exp(-r/3) + 0.07*Math.exp(-Math.pow(ax/130,2))*(1-Math.exp(-dy/6))*Math.exp(-dy/50);
      } else {
        var t=(y-yt)/(yb-yt); var u=2*t-1;
        if(ax<=hw){
          I = 0.2*Math.exp(-Math.pow(ax/75,2.5)) + 0.18*Math.pow(u,4)*Math.exp(-Math.pow(ax/90,3)) + 0.03;
        } else {
          var r1=Math.sqrt((ax-hw)*(ax-hw)+(y-yt)*(y-yt)), r2=Math.sqrt((ax-hw)*(ax-hw)+(yb-y)*(yb-y));
          I = 0.25*Math.exp(-Math.min(r1,r2)/3) + 0.03*Math.exp(-(ax-hw)/30);
        }
      }
      if(I>1) I=1; if(I<0) I=0;
      var col=jet(I); var k=(j*W+i)*4;
      d[k]=col[0]; d[k+1]=col[1]; d[k+2]=col[2]; d[k+3]=255;
    }
  }
  ctx.putImageData(img,0,0);
}
draw('hm1'); draw('hm2');
})();
</script>
</body></html>
